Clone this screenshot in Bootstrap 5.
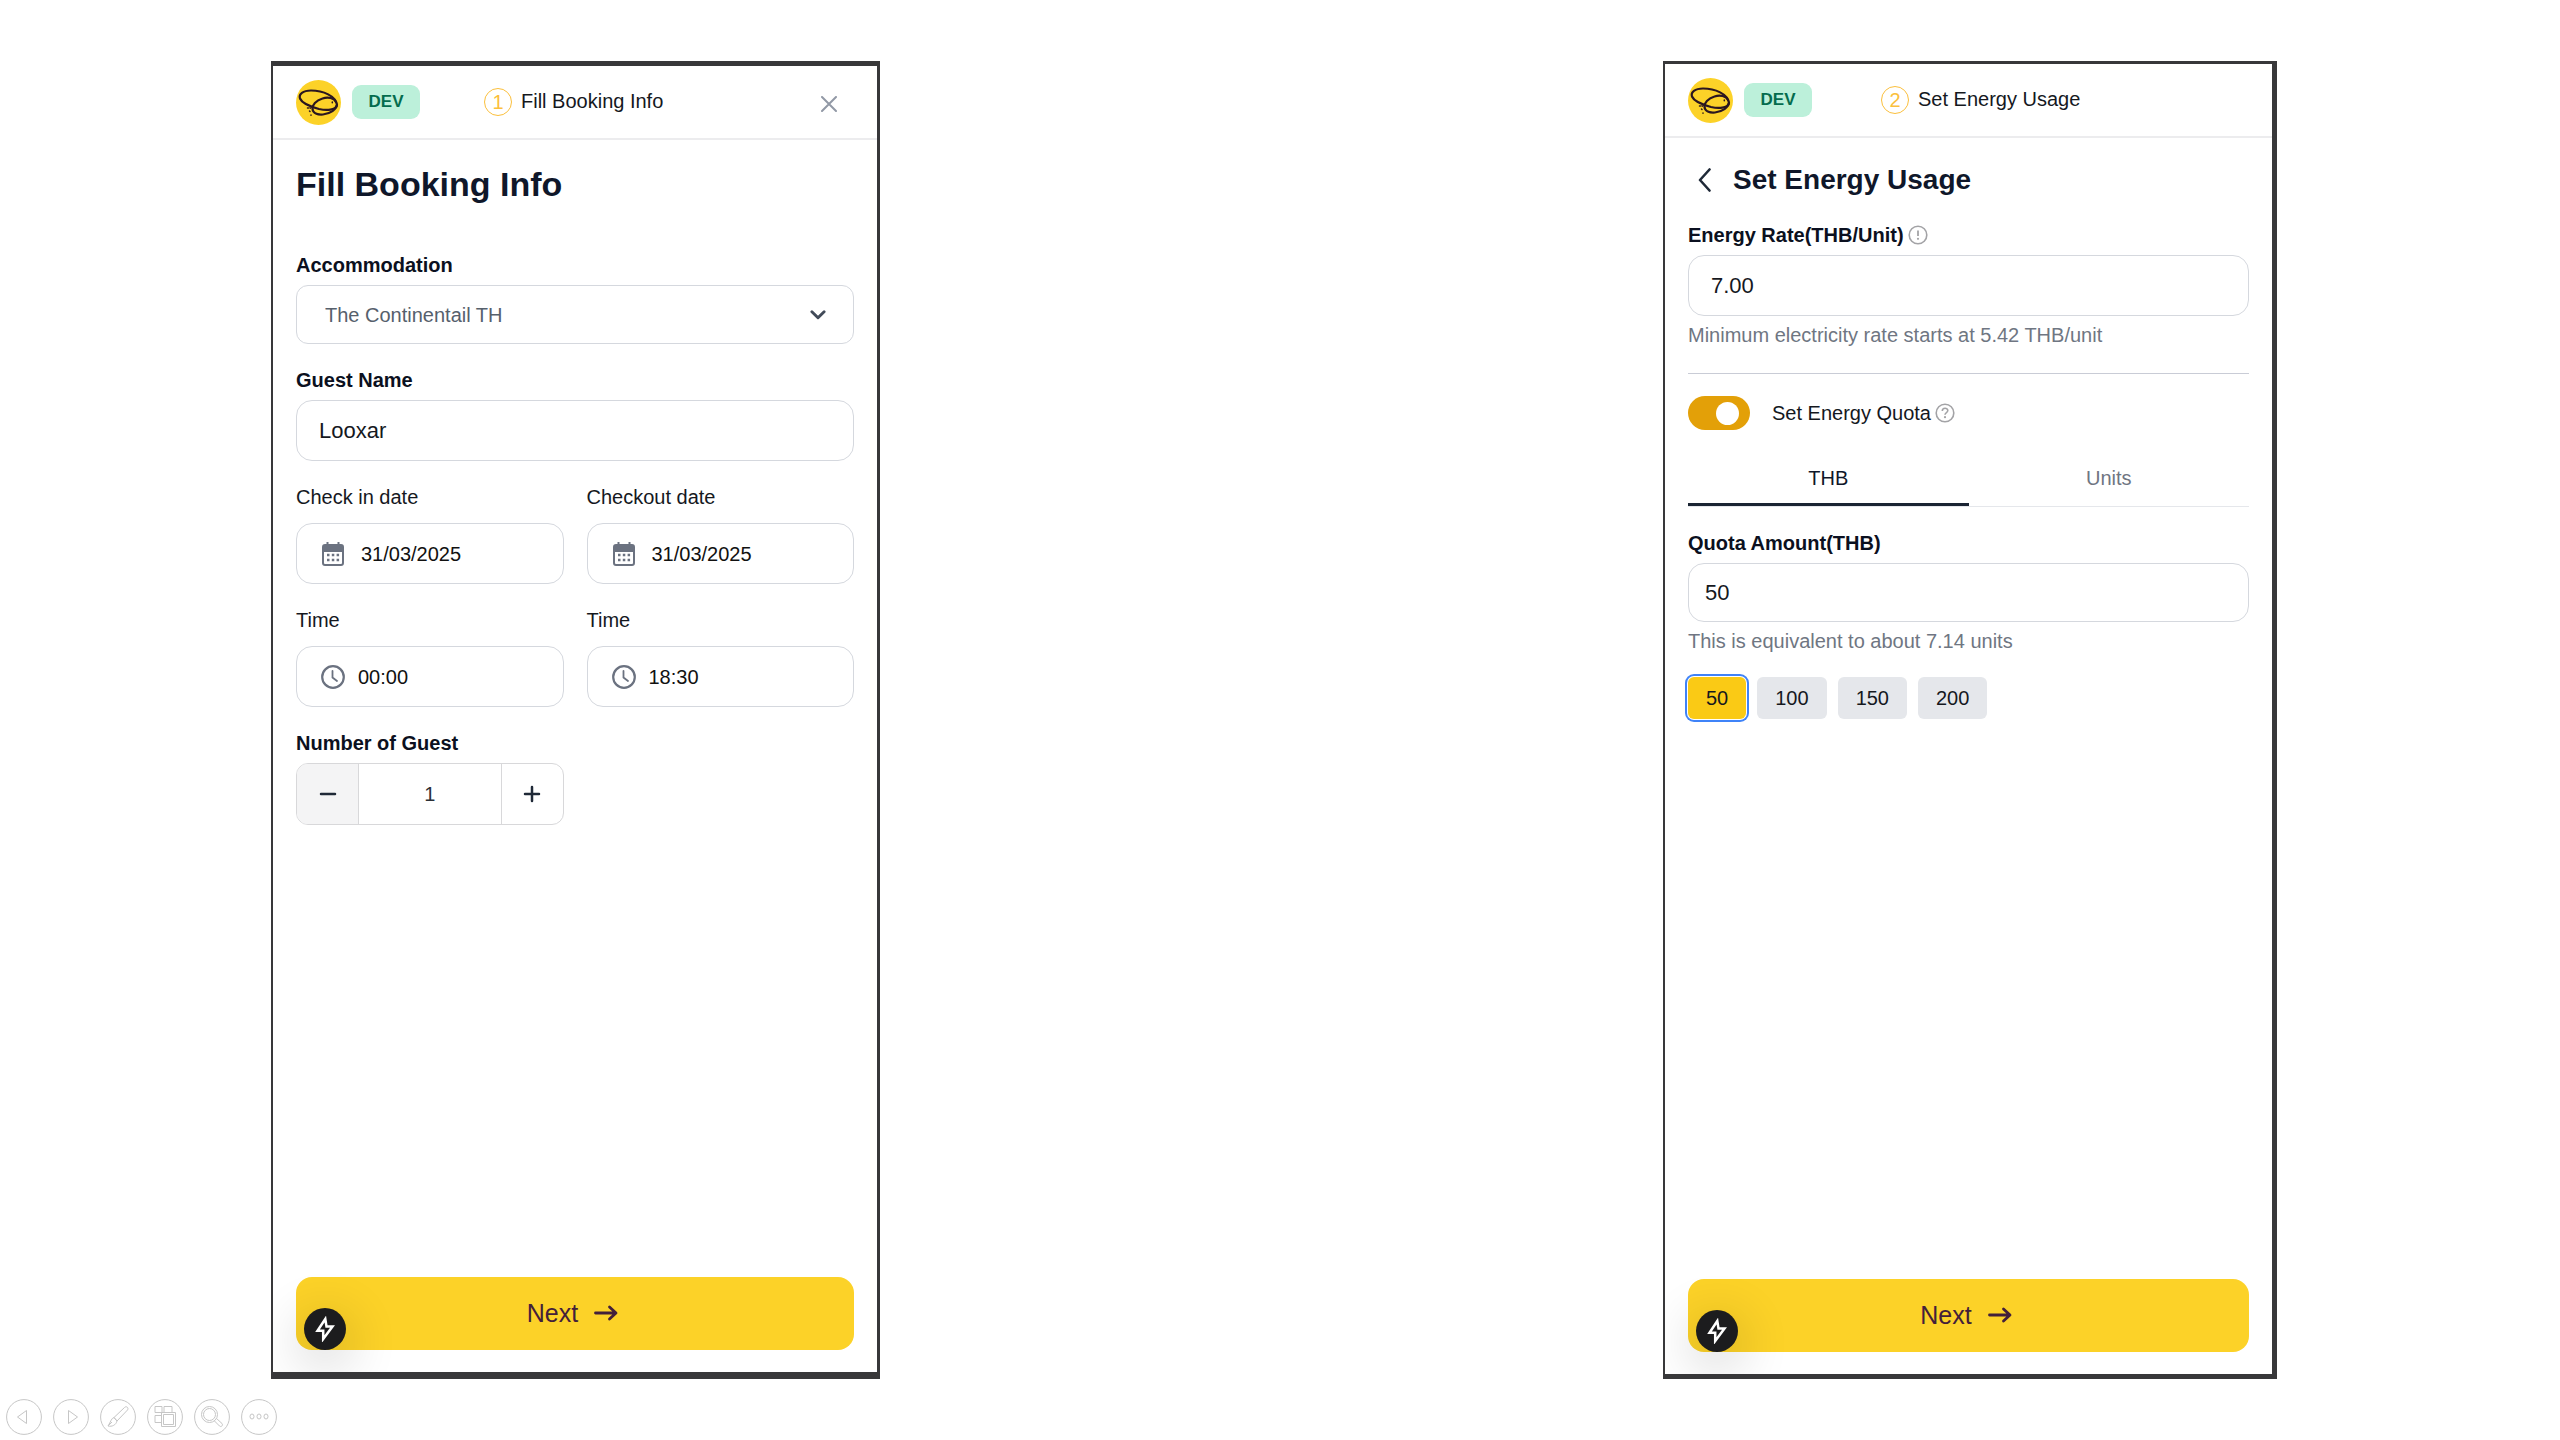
<!DOCTYPE html>
<html lang="en">
<head>
<meta charset="utf-8">
<meta name="viewport" content="width=device-width, initial-scale=1">
<title>Booking flow</title>
<link href="https://cdn.jsdelivr.net/npm/bootstrap@5.3.0/dist/css/bootstrap.min.css" rel="stylesheet">
<style>
  :root { --ink: #0f172a; --line: #d5d8de; --muted: #6f7682; --sun: #fcd228; }
  body { font-family: "Liberation Sans", Arial, sans-serif; font-size: 20px; line-height: 28px; color: #15181e; background: #fff; }
  svg { flex: none; display: block; }
  /* slide margins and the two screens share the window in proportion */
  .stage { display: grid; grid-template-columns: 271fr 609fr 783fr 614fr 283fr; padding-top: 61px; }
  .phone { border: solid #38383a; overflow: hidden; min-width: 0; }
  .phone-a { grid-column: 2; border-width: 5px 3px 7px 2px; }
  .phone-b { grid-column: 4; border-width: 3px 5px 5px 2px; }
  .topbar { height: 74px; border-bottom: 2px solid #ececee; padding: 0 23px; }
  .env-tag { background: #bcf0da; color: #046c4e; font-size: 17px; font-weight: 700; border-radius: 9px; width: 68px; height: 34px; margin-left: 11px; }
  .step { margin-left: 64px; gap: 9px; line-height: 26px; }
  .phone-b .step { margin-left: 69px; }
  .step-num { width: 28px; height: 28px; border: 1px solid #fbbf3c; border-radius: 50%; color: #fbbf3c; font-size: 20px; }
  .btn-plain { border: 0; background: none; padding: 0; }
  .close-x { margin: 3px 17px 0 0; }
  .screen { padding: 24px 23px 22px; }
  .h-main { font-size: 34px; line-height: 40px; font-weight: 700; color: var(--ink); margin: 0 0 47px; }
  .h-sub { font-size: 28px; line-height: 36px; font-weight: 700; color: var(--ink); margin: 0; }
  .sub-row { gap: 22px; padding-left: 10px; margin-bottom: 23px; }
  .field { margin-bottom: 22px; }
  .cap { display: block; margin-bottom: 6px; }
  .cap-strong { font-weight: 700; color: #0b1020; }
  .cap-wide { margin-bottom: 12px; }
  .box { height: 61px; border: 1px solid var(--line); border-radius: 16px; background: #fff; color: #15181e; font-size: 22px; padding: 0 22px; width: 100%; }
  .box-low { height: 59px; padding: 0 16px; }
  .pick-list { height: 59px; border: 1px solid var(--line); border-radius: 12px; font-size: 20px; color: #56606c; padding: 0 28px;
    background: #fff url("data:image/svg+xml,%3Csvg xmlns='http://www.w3.org/2000/svg' viewBox='0 0 14 9'%3E%3Cpath d='M1.5 1.5 7 7l5.500-5.500' fill='none' stroke='%23424b59' stroke-width='2.600' stroke-linecap='round' stroke-linejoin='round'/%3E%3C/svg%3E") no-repeat right 27px center / 16px 10px; }
  .pair { display: grid; grid-template-columns: repeat(2, minmax(0, 1fr)); column-gap: 23px; }
  .picker { height: 61px; border: 1px solid var(--line); border-radius: 16px; padding: 0 24px; gap: 13px; }
  .picker-date { padding: 0 25px; gap: 17px; }
  .picker input { border: 0; padding: 0; min-width: 0; width: 100%; background: none; font-size: 20px; color: #111; }
  .stepper { height: 62px; border: 1px solid #d8d8da; border-radius: 12px; overflow: hidden; }
  .stepper button { width: 62px; flex: none; }
  .stepper button:first-child { background: #f4f4f5; border-right: 1px solid #d8d8da; }
  .stepper button:last-child { border-left: 1px solid #d8d8da; }
  .stepper input { border: 0; min-width: 0; text-align: center; color: #2b2f36; font-size: 20px; }
  .hint { color: var(--muted); margin: 5px 0 0; }
  .rule { height: 1px; border: 0; background: #c9ccd6; opacity: 1; margin: 24px 0 22px; }
  .switch { appearance: none; flex: none; width: 62px; height: 34px; border-radius: 17px; background: #e3a008; padding: 0 11px; margin: 0 18px 0 0; display: flex; align-items: center; justify-content: flex-end; }
  .switch::before { content: ""; width: 23px; height: 23px; border-radius: 50%; background: #fff; }
  .switch:not(:checked) { justify-content: flex-start; background: #c9ccd6; }
  .tabs2 { margin: 34px 0 22px; border-bottom: 1px solid #e5e7eb; }
  .tabs2 button { padding: 0 0 11px; color: var(--muted); border-bottom: 3px solid transparent; }
  .tabs2 button.active { color: var(--ink); border-bottom-color: #1b2533; }
  .chips { gap: 11px; margin-top: 22px; }
  .chip { border: 0; border-radius: 6px; height: 42px; padding: 0 18px; background: #e5e7eb; color: #15181e; }
  .chip.active { background: #faca15; box-shadow: 0 0 0 1px #fff, 0 0 0 3px #3f83f8; }
  .next { height: 73px; border: 0; border-radius: 16px; background: var(--sun); color: #43203a; font-size: 25px; gap: 16px; padding: 0 5px 2px 0; }
  .bolt { position: absolute; left: 8px; bottom: 0; width: 42px; height: 42px; border-radius: 50%; background: #1c1c1e; box-shadow: 0 12px 50px 6px rgba(0,0,0,.16); }
  .showbar { gap: 11px; padding: 20px 6px 5px; }
</style>
</head>
<body>
<svg width="0" height="0" class="position-absolute" aria-hidden="true">
  <symbol id="i-logo" viewBox="0 0 45 45">
    <circle cx="22.500" cy="22.500" r="22.500" fill="#fcd228"/>
    <g fill="none" stroke="#2a1620" stroke-width="2.200" stroke-linecap="round">
      <path d="M41 25C40 16 27 10.500 15 10.500 7 10.500 2.500 14 4 18.500c2 5 10 8 19 10.500 7 1.500 17 1.500 18-4"/>
      <path d="M40 22c-2-4-8-5.500-13.500-3.500C20 20.500 16 25 16.500 29c.5 4 5 6 10.500 5.500 7-.5 13.500-5 14-10"/>
    </g>
    <g stroke="#2a1620" stroke-width="1.500" stroke-linecap="round"><path d="M36.300 22v.8M11.500 28h1M13.500 31l.5.500M15 35v.3M14 27.800l.5.300"/></g>
  </symbol>
  <symbol id="i-cal" viewBox="0 0 22 24"><path d="M4.500 0h2v2h9V0h2v2H19a3 3 0 0 1 3 3v16a3 3 0 0 1-3 3H3a3 3 0 0 1-3-3V5a3 3 0 0 1 3-3h1.500zM2 10v11a1 1 0 0 0 1 1h16a1 1 0 0 0 1-1V10z" fill="#6b7280" fill-rule="evenodd"/><path d="M5 11.800h2.500v2.500H5zm4.800 0h2.500v2.500H9.800zm4.800 0h2.500v2.500h-2.500zM5 16.800h2.500v2.500H5zm4.800 0h2.500v2.500H9.800zm4.800 0h2.500v2.500h-2.500z" fill="#6b7280"/></symbol>
  <symbol id="i-clock" viewBox="0 0 24 24"><circle cx="12" cy="12" r="10.800" fill="none" stroke="#6b7280" stroke-width="2.200"/><path d="M11.500 6v6.500l4.500 3.500" fill="none" stroke="#6b7280" stroke-width="1.800" stroke-linecap="round"/></symbol>
  <symbol id="i-arrow" viewBox="0 0 24 16"><path d="M1.500 8h20M15.500 2l6.500 6-6.500 6" fill="none" stroke="#43203a" stroke-width="2.800" stroke-linecap="round" stroke-linejoin="round"/></symbol>
  <symbol id="i-bolt" viewBox="0 0 20 26"><path d="M10.300 3 2.500 14.800h5.700V23L17.500 10.500h-6z" fill="none" stroke="#fff" stroke-width="2.500"/></symbol>
</svg>

<div class="d-flex flex-column min-vh-100">
  <main class="stage flex-grow-1">
    <section class="phone phone-a d-flex flex-column">
      <header class="topbar d-flex align-items-center">
        <svg width="45" height="45" role="img" aria-label="Logo"><use href="#i-logo"/></svg>
        <span class="env-tag d-flex align-items-center justify-content-center">DEV</span>
        <div class="step d-flex align-items-start"><span class="step-num d-flex align-items-center justify-content-center">1</span>Fill Booking Info</div>
        <button class="btn-plain close-x ms-auto" type="button" aria-label="Close"><svg width="16" height="16" viewBox="0 0 16 16"><path d="M1 1l14 14M15 1 1 15" stroke="#9299a6" stroke-width="2" stroke-linecap="round"/></svg></button>
      </header>
      <form class="screen d-flex flex-column flex-grow-1">
        <h1 class="h-main">Fill Booking Info</h1>
        <div class="field">
          <label class="cap cap-strong" for="acc">Accommodation</label>
          <select id="acc" class="form-select pick-list"><option>The Continentail TH</option></select>
        </div>
        <div class="field">
          <label class="cap cap-strong" for="guest">Guest Name</label>
          <input id="guest" class="box" type="text" value="Looxar">
        </div>
        <div class="pair">
          <div class="field">
            <label class="cap cap-wide" for="din">Check in date</label>
            <div class="picker picker-date d-flex align-items-center"><svg width="22" height="24"><use href="#i-cal"/></svg><input id="din" type="text" value="31/03/2025"></div>
          </div>
          <div class="field">
            <label class="cap cap-wide" for="dout">Checkout date</label>
            <div class="picker picker-date d-flex align-items-center"><svg width="22" height="24"><use href="#i-cal"/></svg><input id="dout" type="text" value="31/03/2025"></div>
          </div>
          <div class="field">
            <label class="cap cap-wide" for="tin">Time</label>
            <div class="picker d-flex align-items-center"><svg width="24" height="24"><use href="#i-clock"/></svg><input id="tin" type="text" value="00:00"></div>
          </div>
          <div class="field">
            <label class="cap cap-wide" for="tout">Time</label>
            <div class="picker d-flex align-items-center"><svg width="24" height="24"><use href="#i-clock"/></svg><input id="tout" type="text" value="18:30"></div>
          </div>
          <div>
            <label class="cap cap-strong" for="num">Number of Guest</label>
            <div class="stepper d-flex">
              <button class="btn-plain d-flex align-items-center justify-content-center" type="button" aria-label="Fewer"><svg width="18" height="18" viewBox="0 0 18 18"><path d="M2 9h14" stroke="#1f2937" stroke-width="2.500" stroke-linecap="round"/></svg></button>
              <input id="num" class="flex-grow-1" type="text" value="1">
              <button class="btn-plain d-flex align-items-center justify-content-center" type="button" aria-label="More"><svg width="18" height="18" viewBox="0 0 18 18"><path d="M2 9h14M9 2v14" stroke="#1f2937" stroke-width="2.500" stroke-linecap="round"/></svg></button>
            </div>
          </div>
        </div>
        <div class="position-relative mt-auto">
          <button class="next w-100 d-flex align-items-center justify-content-center" type="button">Next <svg width="24" height="16"><use href="#i-arrow"/></svg></button>
          <button class="btn-plain bolt d-flex align-items-center justify-content-center" type="button" aria-label="Dev tools"><svg width="20" height="26"><use href="#i-bolt"/></svg></button>
        </div>
      </form>
    </section>

    <section class="phone phone-b d-flex flex-column">
      <header class="topbar d-flex align-items-center">
        <svg width="45" height="45" role="img" aria-label="Logo"><use href="#i-logo"/></svg>
        <span class="env-tag d-flex align-items-center justify-content-center">DEV</span>
        <div class="step d-flex align-items-start"><span class="step-num d-flex align-items-center justify-content-center">2</span>Set Energy Usage</div>
      </header>
      <form class="screen d-flex flex-column flex-grow-1">
        <div class="sub-row d-flex align-items-center">
          <button class="btn-plain" type="button" aria-label="Back"><svg width="13" height="24" viewBox="0 0 13 24"><path d="M11.500 1.500 2 12l9.500 10.500" fill="none" stroke="#1f2937" stroke-width="2.600" stroke-linecap="round" stroke-linejoin="round"/></svg></button>
          <h2 class="h-sub">Set Energy Usage</h2>
        </div>
        <div class="cap d-flex align-items-center gap-1">
          <label class="cap-strong" for="rate">Energy Rate(THB/Unit)</label>
          <svg width="20" height="20" viewBox="0 0 20 20"><circle cx="10" cy="10" r="8.800" fill="none" stroke="#a3a3a6" stroke-width="1.600"/><path d="M10 5.500v5.500" stroke="#a3a3a6" stroke-width="1.800"/><circle cx="10" cy="13.800" r="1.100" fill="#a3a3a6"/></svg>
        </div>
        <input id="rate" class="box" type="text" value="7.00">
        <p class="hint">Minimum electricity rate starts at 5.42 THB/unit</p>
        <hr class="rule">
        <div class="d-flex align-items-center gap-1">
          <input id="quota-on" class="switch" type="checkbox" role="switch" checked>
          <label for="quota-on">Set Energy Quota</label>
          <svg width="20" height="20" viewBox="0 0 20 20"><circle cx="10" cy="10" r="8.800" fill="none" stroke="#a3a3a6" stroke-width="1.600"/><path d="M7.300 8c0-3.600 5.500-3.500 5.500-.4 0 2-2.800 2-2.800 4.200" fill="none" stroke="#a3a3a6" stroke-width="1.600"/><circle cx="10" cy="14.200" r="1.100" fill="#a3a3a6"/></svg>
        </div>
        <div class="tabs2 d-flex" role="tablist">
          <button class="btn-plain flex-fill w-50 active" type="button" role="tab">THB</button>
          <button class="btn-plain flex-fill w-50" type="button" role="tab">Units</button>
        </div>
        <label class="cap cap-strong" for="amount">Quota Amount(THB)</label>
        <input id="amount" class="box box-low" type="text" value="50">
        <p class="hint">This is equivalent to about 7.14 units</p>
        <div class="chips d-flex">
          <button class="chip active" type="button">50</button>
          <button class="chip" type="button">100</button>
          <button class="chip" type="button">150</button>
          <button class="chip" type="button">200</button>
        </div>
        <div class="position-relative mt-auto">
          <button class="next w-100 d-flex align-items-center justify-content-center" type="button">Next <svg width="24" height="16"><use href="#i-arrow"/></svg></button>
          <button class="btn-plain bolt d-flex align-items-center justify-content-center" type="button" aria-label="Dev tools"><svg width="20" height="26"><use href="#i-bolt"/></svg></button>
        </div>
      </form>
    </section>
  </main>

  <footer class="showbar d-flex">
    <button class="btn-plain" type="button" aria-label="Previous"><svg width="36" height="36" viewBox="0 0 36 36" fill="none" stroke="#c6c6c6"><circle cx="18" cy="18" r="17.400"/><path d="M20.500 11.500v13L11.500 18z"/></svg></button>
    <button class="btn-plain" type="button" aria-label="Forward"><svg width="36" height="36" viewBox="0 0 36 36" fill="none" stroke="#c6c6c6"><circle cx="18" cy="18" r="17.400"/><path d="M15.500 11.500v13l9-6.500z"/></svg></button>
    <button class="btn-plain" type="button" aria-label="Pen"><svg width="36" height="36" viewBox="0 0 36 36" fill="none" stroke="#c6c6c6"><circle cx="18" cy="18" r="17.400"/><path d="M14 18.500 24.500 8.500c2-2 4.500.5 3 2.500L17 22zM14 18.500l3 3.500M14 18.500c-3 1-3 4-6 8.500 4 1 8-1 9-5M8 27l4-4"/></svg></button>
    <button class="btn-plain" type="button" aria-label="All slides"><svg width="36" height="36" viewBox="0 0 36 36" fill="none" stroke="#c6c6c6"><circle cx="18" cy="18" r="17.400"/><path d="M8 7.500h7v6H8zM17 13V7.500h8V13M14 16.500H8v7h6M14.500 13.500h14v14h-14zM16.500 15.500h10v10h-10z"/></svg></button>
    <button class="btn-plain" type="button" aria-label="Zoom"><svg width="36" height="36" viewBox="0 0 36 36" fill="none" stroke="#c6c6c6"><circle cx="18" cy="18" r="17.400"/><circle cx="15.500" cy="15.500" r="8"/><circle cx="15.500" cy="15.500" r="6"/><path d="M20.500 22l5 5c1.500 1.500 4-.5 2.500-2.500l-5.500-5"/></svg></button>
    <button class="btn-plain" type="button" aria-label="More options"><svg width="36" height="36" viewBox="0 0 36 36" fill="none" stroke="#c6c6c6"><circle cx="18" cy="18" r="17.400"/><ellipse cx="11" cy="17.500" rx="2" ry="2.500"/><ellipse cx="18" cy="17.500" rx="2" ry="2.500"/><ellipse cx="25" cy="17.500" rx="2" ry="2.500"/></svg></button>
  </footer>
</div>
<script src="https://cdn.jsdelivr.net/npm/bootstrap@5.3.0/dist/js/bootstrap.bundle.min.js"></script>
</body>
</html>
